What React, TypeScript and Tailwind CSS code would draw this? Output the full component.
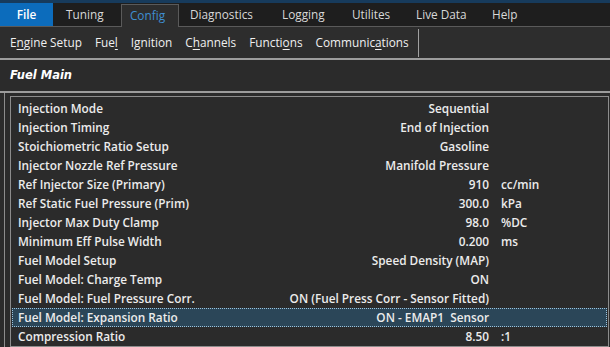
import React from "react";

// ─── DATA ───────────────────────────────────────────────────────────────
type Tab = { name: string; w: string };

const tabs: Tab[] = [
  { name: "Tuning", w: "w-[68px] pl-[13px]" },
  { name: "Config", w: "" },
  { name: "Diagnostics", w: "w-[91px] pl-[11px]" },
  { name: "Logging", w: "w-[70px] pl-[12px]" },
  { name: "Utilites", w: "w-[64px] pl-[12px]" },
  { name: "Live Data", w: "w-[76px] pl-[12px]" },
  { name: "Help", w: "w-[60px] pl-[12px]" },
];

type Row = { label: string; value: string; unit?: string; selected?: boolean };

const rows: Row[] = [
  { label: "Injection Mode", value: "Sequential" },
  { label: "Injection Timing", value: "End of Injection" },
  { label: "Stoichiometric Ratio Setup", value: "Gasoline" },
  { label: "Injector Nozzle Ref Pressure", value: "Manifold Pressure" },
  { label: "Ref Injector Size (Primary)", value: "910", unit: "cc/min" },
  { label: "Ref Static Fuel Pressure (Prim)", value: "300.0", unit: "kPa" },
  { label: "Injector Max Duty Clamp", value: "98.0", unit: "%DC" },
  { label: "Minimum Eff Pulse Width", value: "0.200", unit: "ms" },
  { label: "Fuel Model Setup", value: "Speed Density (MAP)" },
  { label: "Fuel Model: Charge Temp", value: "ON" },
  { label: "Fuel Model: Fuel Pressure Corr.", value: "ON (Fuel Press Corr - Sensor Fitted)" },
  { label: "Fuel Model: Expansion Ratio", value: "ON - EMAP1  Sensor", selected: true },
  { label: "Compression Ratio", value: "8.50", unit: ":1" },
];

// access key underline helper
const Key = ({ pre, k, post }: { pre: string; k: string; post: string }) => (
  <span>
    {pre}
    <span className="underline underline-offset-2">{k}</span>
    {post}
  </span>
);

// ─── TAB BAR ────────────────────────────────────────────────────────────
const TabBar = () => (
  <div className="flex h-[27px] items-stretch border-t-[3px] border-[#173b5c] bg-[#1e1e1e] border-b border-b-[#5a5a5a] text-[11.8px]">
    <div className="flex w-[53px] items-center justify-center bg-[#0c6cbc] font-semibold text-white">File</div>
    {tabs.map((t) =>
      t.name === "Config" ? (
        <div
          key={t.name}
          className="relative -mb-px mt-[1px] flex w-[58px] items-center justify-center border border-b-0 border-[#5a5a5a] bg-[#2d2d2d] pr-[8px] pl-[3px] text-[#3f8fd2]"
        >
          {t.name}
        </div>
      ) : (
        <div key={t.name} className={"flex items-center text-[#d8d8d8] " + t.w}>
          {t.name}
        </div>
      )
    )}
  </div>
);

// ─── MAIN ───────────────────────────────────────────────────────────────
export default function App() {
  return (
    <div
      className="h-[347px] w-[610px] overflow-hidden bg-[#2b2b2b] text-[11.8px] text-[#ececec]"
      style={{ fontFamily: '"Open Sans", "Noto Sans", sans-serif' }}
    >
      <TabBar />

      {/* sub menu */}
      <div className="flex h-[31px] items-center bg-[#2d2d2d] pl-[10px] text-[11.8px] text-[#f0f0f0]">
        <div className="flex gap-[13px]">
          <Key pre="E" k="n" post="gine Setup" />
          <Key pre="Fue" k="l" post="" />
          <Key pre="I" k="g" post="nition" />
          <Key pre="C" k="h" post="annels" />
          <Key pre="Functi" k="o" post="ns" />
          <Key pre="Communic" k="a" post="tions" />
        </div>
        <div className="ml-[9px] h-[28px] w-px bg-[#a0a0a0]" />
      </div>

      <div className="h-[2px] bg-[#9c9c9c]" />

      {/* section header */}
      <div
        className="flex h-[31px] items-center pl-[10px] text-[11.5px] font-bold italic text-white"
        style={{ fontFamily: '"DejaVu Sans", sans-serif' }}
      >
        Fuel Main
      </div>

      <div className="h-[2px] bg-[#9c9c9c]" />

      {/* panel */}
      <div className="ml-[4px] mr-[1px] border-l border-[#8c8c8c] pl-[5px] pt-[3px]">
        <div className="border border-[#8c8c8c] pt-[2px] font-semibold">
          {rows.map((r) => (
            <div
              key={r.label}
              className={
                "mx-px grid h-[19px] grid-cols-[253px_218px_1fr] items-center pl-[5px] " +
                (r.selected ? "border border-dotted border-[#9cc3dc] bg-[#2b4658]" : "border border-transparent")
              }
            >
              <span className="whitespace-nowrap">{r.label}</span>
              <span className="whitespace-pre text-right">{r.value}</span>
              <span className="pl-[12px]">{r.unit}</span>
            </div>
          ))}
        </div>
      </div>
    </div>
  );
}
